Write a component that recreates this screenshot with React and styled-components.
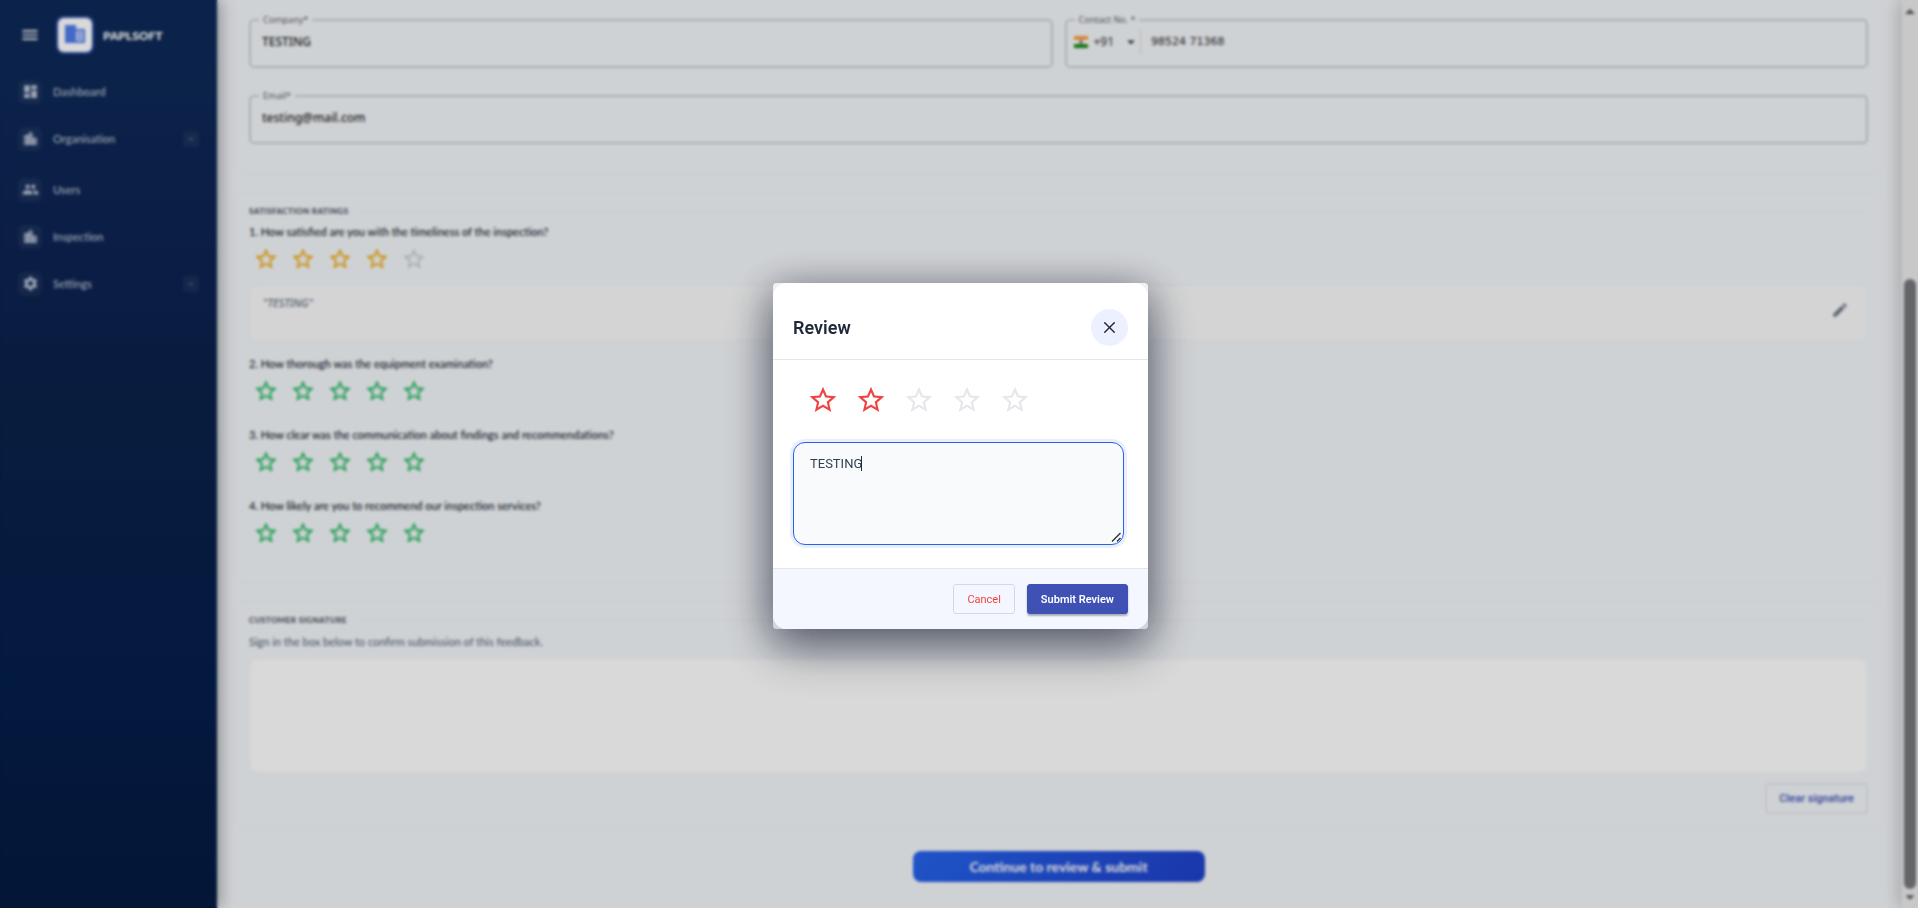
import React, { useState } from "react";
import styled, { createGlobalStyle, css } from "styled-components";
import {
  MdMenu,
  MdDashboard,
  MdLocationCity,
  MdPeople,
  MdSettings,
  MdEdit,
  MdExpandMore,
  MdArrowDropDown,
  MdArrowDropUp,
} from "react-icons/md";
import { X } from "lucide-react";

const GlobalStyle = createGlobalStyle`
  *, *::before, *::after {
    box-sizing: border-box;
  }
  body {
    margin: 0;
    background: #f4f7fa;
    font-family: "Noto Sans", sans-serif;
    color: #1e293b;
  }
  button, input, textarea, select {
    font-family: inherit;
  }
`;

// 전체 레이아웃
const Shell = styled.div`
  display: flex;
  height: 100vh;
  overflow: hidden;
`;

// 사이드바
const Sidebar = styled.aside`
  width: 217px;
  flex-shrink: 0;
  background: linear-gradient(180deg, #0e2a58 0%, #0d2352 28%, #0a2148 45%, #041e4a 75%, #051a40 100%);
  box-shadow: 4px 0 14px rgba(0, 0, 0, 0.3);
  z-index: 1;
`;

const Brand = styled.div`
  display: flex;
  align-items: center;
  height: 68px;
  padding: 2px 0 0 20px;
  color: #fff;
`;

const MenuButton = styled.button`
  display: flex;
  padding: 0;
  border: none;
  background: none;
  color: #fff;
`;

const LogoTile = styled.div`
  display: flex;
  align-items: center;
  justify-content: center;
  width: 34px;
  height: 34px;
  margin: 0 11px 0 18px;
  border-radius: 6px;
  background: #fff;
  box-shadow: 0 0 0 2px rgba(79, 124, 255, 0.5);
`;

const BrandName = styled.strong`
  font-family: Lato, sans-serif;
  font-size: 12px;
  font-weight: 900;
`;

const NavList = styled.ul`
  list-style: none;
  margin: 0;
  padding: 0 18px;
`;

const NavItem = styled.li`
  display: flex;
  align-items: center;
  height: 47px;
  margin-bottom: ${(props) => (props.$spaced ? "4px" : "0")};
`;

const NavLink = styled.a`
  display: flex;
  align-items: center;
  flex: 1;
  gap: 11px;
  color: #b9c4d6;
  font-family: Lato, sans-serif;
  font-size: 11px;
  font-weight: 500;
  text-decoration: none;
`;

const NavIcon = styled.span`
  display: flex;
  align-items: center;
  justify-content: center;
  width: 24px;
  height: 24px;
  border-radius: 6px;
  background: rgba(255, 255, 255, 0.05);
`;

const NavToggle = styled.button`
  display: flex;
  align-items: center;
  justify-content: center;
  width: 16px;
  height: 16px;
  padding: 0;
  border: none;
  border-radius: 4px;
  background: rgba(255, 255, 255, 0.05);
  color: #6d7b96;
`;

// 본문
const Main = styled.main`
  flex: 1;
  min-width: 0;
  padding: 0 19px 0 17px;
`;

const Card = styled.section`
  border: 1px solid #efeff4;
  border-radius: 10px;
  padding: 0 14px;
  margin-bottom: 18px;
  ${(props) =>
    props.$first &&
    css`
      border-top: none;
      border-radius: 0 0 10px 10px;
      padding-top: 13px;
      padding-bottom: 29px;
    `}
`;

const FieldGrid = styled.div`
  display: grid;
  grid-template-columns: 1fr 1fr;
  gap: 21px 12px;
`;

const Field = styled.fieldset`
  display: flex;
  align-items: center;
  height: 55px;
  min-width: 0;
  margin: 0;
  padding: 0 11px 10px;
  border: 2px solid #cbced2;
  border-radius: 5px;
  grid-column: ${(props) => (props.$wide ? "1 / -1" : "auto")};
  legend {
    padding: 0 4px;
    margin-left: -3px;
    font-size: 9px;
    line-height: 14px;
    color: #5b616b;
  }
`;

const TextInput = styled.input`
  flex: 1;
  min-width: 0;
  padding: 0;
  border: none;
  background: none;
  font-size: 12px;
  font-weight: 500;
  color: #1c1f24;
  outline: none;
  ${(props) => props.$phone && `font-family: "DejaVu Sans", sans-serif; font-size: 11px;`}
`;

const DialCode = styled.button`
  display: flex;
  align-items: center;
  height: 26px;
  margin-left: -4px;
  margin-right: 10px;
  padding: 0;
  border: none;
  border-right: 1px solid #d3d5d9;
  background: none;
  font-size: 12px;
  color: #26292e;
  svg:first-child {
    margin-right: 6px;
  }
  svg:last-child {
    margin-left: 8px;
  }
`;

const SectionTitle = styled.h2`
  display: flex;
  align-items: center;
  gap: 8px;
  margin: 0;
  padding: 12px 0 8px;
  font-family: Lato, sans-serif;
  font-size: 8px;
  line-height: 12px;
  font-weight: 900;
  letter-spacing: 0.05em;
  text-transform: uppercase;
  color: #4b5563;
  &::after {
    content: "";
    flex: 1;
    height: 1px;
    background: #ececf1;
  }
`;

const QuestionList = styled.div`
  padding-bottom: 12px;
`;

const Question = styled.div`
  height: ${(props) => (props.$reviewed ? "60px" : "71px")};
  p {
    margin: 0;
    font-family: Lato, sans-serif;
    font-size: 11px;
    line-height: 14px;
    font-weight: 500;
    color: #0f172a;
  }
`;

const StarRow = styled.div`
  display: flex;
  gap: ${(props) => (props.$large ? "16px" : "11px")};
  padding: ${(props) => (props.$large ? "24px 34px" : "7px 4px")};
`;

const StarButton = styled.button`
  display: flex;
  padding: 0;
  border: none;
  background: none;
  color: ${(props) => props.$color};
`;

const ReviewNote = styled.div`
  display: flex;
  align-items: center;
  justify-content: space-between;
  height: 56px;
  margin-bottom: 16px;
  padding: 0 18px 6px 13px;
  border: 1px solid #efeff3;
  border-radius: 8px;
  background: #f9fafb;
  color: #4b5563;
  em {
    align-self: flex-start;
    padding-top: 9px;
    font-size: 11px;
    line-height: 16px;
  }
`;

const IconButton = styled.button`
  display: flex;
  padding: 0;
  border: none;
  background: none;
  color: #6b7280;
`;

const Hint = styled.p`
  margin: 0;
  padding-bottom: 8px;
  font-family: Lato, sans-serif;
  font-size: 11px;
  line-height: 16px;
  color: #526077;
`;

const SignaturePad = styled.div`
  height: 115px;
  border: 1px solid #f0f0f4;
  border-radius: 8px;
  background: #fff;
`;

const ClearRow = styled.div`
  display: flex;
  justify-content: flex-end;
  padding: 10px 0 13px;
`;

const ClearButton = styled.button`
  height: 31px;
  padding: 0 12px;
  border: 2px solid #e4e6ec;
  border-radius: 4px;
  background: none;
  font-family: Roboto, sans-serif;
  font-size: 11px;
  font-weight: 500;
  color: #3f51b5;
`;

const ContinueButton = styled.button`
  display: block;
  width: 292px;
  height: 31px;
  margin: 23px auto 0;
  border: none;
  border-radius: 8px;
  background: linear-gradient(135deg, #2563eb, #1e40c8);
  font-family: Lato, sans-serif;
  font-size: 14px;
  font-weight: 700;
  color: #fff;
`;

const ScrollRail = styled.div`
  display: flex;
  flex-direction: column;
  align-items: center;
  width: 16px;
  background: #ececec;
  box-shadow: -2px 0 18px rgba(0, 0, 0, 0.25);
  color: #55575b;
  svg {
    flex-shrink: 0;
  }
`;

const ScrollThumb = styled.div`
  width: 12px;
  height: calc(67vh + 2px);
  margin-top: auto;
  margin-bottom: -3px;
  border-radius: 6px;
  background: #75777b;
`;

// 리뷰 모달
const Backdrop = styled.div`
  position: fixed;
  inset: 0;
  z-index: 10;
  display: flex;
  align-items: center;
  justify-content: center;
  padding: 4px 0 0 3px;
  background: rgba(0, 0, 0, 0.15);
  backdrop-filter: blur(1.5px);
  font-family: Roboto, sans-serif;
`;

const DialogSurface = styled.div`
  width: 375px;
  border-radius: 4px;
  background: linear-gradient(#f1f1f2, #d4d5d9);
  box-shadow: 0 20px 50px rgba(15, 23, 42, 0.45), 0 6px 40px rgba(15, 23, 42, 0.4);
`;

const Dialog = styled.div`
  overflow: hidden;
  border-radius: 14px;
  background: #fff;
`;

const DialogHeader = styled.header`
  display: flex;
  align-items: center;
  justify-content: space-between;
  height: 77px;
  padding: 12px 20px 0;
  border-bottom: 1px solid #e2e5ea;
  h1 {
    margin: 0;
    font-size: 18px;
    font-weight: 600;
    color: #1e293b;
  }
`;

const CloseButton = styled.button`
  display: flex;
  align-items: center;
  justify-content: center;
  width: 37px;
  height: 37px;
  padding: 0;
  border: none;
  border-radius: 50%;
  background: #edf1ff;
  color: #1e293b;
`;

const ReviewField = styled.div`
  position: relative;
  padding: 2px 24px 23px 20px;
`;

const ReviewArea = styled.textarea`
  display: block;
  width: 100%;
  height: 103px;
  padding: 13px 16px;
  border: 1px solid #2563eb;
  border-radius: 12px;
  outline: none;
  background: #f8fafc;
  box-shadow: 0 0 0 3px rgba(37, 99, 235, 0.1);
  font-size: 13px;
  line-height: 16px;
  color: #334155;
  caret-color: transparent;
  resize: none;
`;

const Caret = styled.span`
  position: absolute;
  top: 16px;
  left: 88px;
  width: 1px;
  height: 15px;
  background: #1e293b;
`;

const ResizeGrip = styled.svg`
  position: absolute;
  right: 26px;
  bottom: 25px;
  pointer-events: none;
`;

const DialogFooter = styled.footer`
  display: flex;
  justify-content: flex-end;
  gap: 12px;
  padding: 15px 20px;
  border-top: 1px solid #e2e5ea;
  background: #f4f7ff;
`;

const ActionButton = styled.button`
  height: 30px;
  padding: 0 13px;
  border: 1px solid #d5d9e4;
  border-radius: 3px;
  background: transparent;
  font-size: 11px;
  font-weight: 400;
  color: #f44336;
  ${(props) =>
    props.$primary &&
    css`
      border-color: #3f51b5;
      background: #3f51b5;
      color: #fff;
      font-weight: 600;
      box-shadow: 0 2px 2px rgba(0, 0, 0, 0.3);
    `}
`;

const NAV = [
  { name: "Dashboard", icon: MdDashboard },
  { name: "Organisation", icon: MdLocationCity, toggle: true },
  { name: "Users", icon: MdPeople },
  { name: "Inspection", icon: MdLocationCity },
  { name: "Settings", icon: MdSettings, toggle: true },
];

const QUESTIONS = [
  { text: "How satisfied are you with the timeliness of the inspection?", score: 4, note: "TESTING" },
  { text: "How thorough was the equipment examination?", score: 5 },
  { text: "How clear was the communication about findings and recommendations?", score: 5 },
  { text: "How likely are you to recommend our inspection services?", score: 5 },
];

const scoreColor = (score) => {
  if (score <= 2) return "#ef4444";
  if (score <= 4) return "#eda60c";
  return "#16b455";
};

const StarIcon = ({ size }) => (
  <svg width={size} height={size} viewBox="0 0 24 24" fill="currentColor">
    <path d="M22 9.24l-7.19-.62L12 2 9.19 8.63 2 9.24l5.46 4.73L5.82 21 12 17.27 18.18 21l-1.63-7.03L22 9.24zM12 15.4l-3.76 2.27 1-4.28-3.32-2.88 4.38-.38L12 6.1l1.71 4.04 4.38.38-3.32 2.88 1 4.28L12 15.4z" />
  </svg>
);

const Stars = ({ score, large, onChange }) => (
  <StarRow $large={large}>
    {[1, 2, 3, 4, 5].map((n) => (
      <StarButton
        key={n}
        type="button"
        aria-label={`${n} star`}
        $color={n <= score ? scoreColor(score) : large ? "#e5e7eb" : "#c6c9cf"}
        onClick={() => onChange && onChange(n)}
      >
        <StarIcon size={large ? 32 : 26} />
      </StarButton>
    ))}
  </StarRow>
);

const Logo = () => (
  <svg width="22" height="22" viewBox="0 0 22 22">
    <path d="M1 1h11v4h9v14H1z" fill="#4f7bea" />
    <path d="M12 7h7v10h-7z" fill="#cfdcfb" />
    <path d="M14 9h3v2h-3zM14 13h3v2h-3z" fill="#4f7bea" />
  </svg>
);

const Flag = () => (
  <svg width="14" height="12" viewBox="0 0 14 12">
    <path d="M0 0h14v4H0z" fill="#ff9933" />
    <path d="M0 4h14v4H0z" fill="#fff" />
    <path d="M0 8h14v4H0z" fill="#138808" />
    <circle cx="7" cy="6" r="1.5" fill="#2a2a86" />
  </svg>
);

const App = () => {
  const [score, setScore] = useState(2);
  const [review, setReview] = useState("TESTING");

  return (
    <>
      <GlobalStyle />
      <Shell>
        <Sidebar>
          <Brand>
            <MenuButton type="button" aria-label="Menu">
              <MdMenu size={20} />
            </MenuButton>
            <LogoTile>
              <Logo />
            </LogoTile>
            <BrandName>PAPLSOFT</BrandName>
          </Brand>
          <NavList>
            {NAV.map(({ name, icon: Icon, toggle }) => (
              <NavItem key={name} $spaced={name === "Organisation"}>
                <NavLink href="#">
                  <NavIcon>
                    <Icon size={17} />
                  </NavIcon>
                  {name}
                </NavLink>
                {toggle && (
                  <NavToggle type="button" aria-label={`Expand ${name}`}>
                    <MdExpandMore size={10} />
                  </NavToggle>
                )}
              </NavItem>
            ))}
          </NavList>
        </Sidebar>

        <Main>
          <Card $first>
            <FieldGrid>
              <Field>
                <legend>Company*</legend>
                <TextInput aria-label="Company" defaultValue="TESTING" />
              </Field>
              <Field>
                <legend>Contact No. *</legend>
                <DialCode type="button">
                  <Flag />
                  +91
                  <MdArrowDropDown size={18} />
                </DialCode>
                <TextInput $phone aria-label="Contact number" defaultValue="98524 71368" />
              </Field>
              <Field $wide>
                <legend>Email*</legend>
                <TextInput aria-label="Email" defaultValue="testing@mail.com" />
              </Field>
            </FieldGrid>
          </Card>

          <Card>
            <SectionTitle>Satisfaction ratings</SectionTitle>
            <QuestionList>
              {QUESTIONS.map((q, i) => (
                <React.Fragment key={q.text}>
                  <Question $reviewed={!!q.note}>
                    <p>
                      {i + 1}. {q.text}
                    </p>
                    <Stars score={q.score} />
                  </Question>
                  {q.note && (
                    <ReviewNote>
                      <em>"{q.note}"</em>
                      <IconButton type="button" aria-label="Edit review">
                        <MdEdit size={18} />
                      </IconButton>
                    </ReviewNote>
                  )}
                </React.Fragment>
              ))}
            </QuestionList>
          </Card>

          <Card>
            <SectionTitle>Customer signature</SectionTitle>
            <Hint>Sign in the box below to confirm submission of this feedback.</Hint>
            <SignaturePad />
            <ClearRow>
              <ClearButton type="button">Clear signature</ClearButton>
            </ClearRow>
          </Card>

          <ContinueButton type="button">Continue to review &amp; submit</ContinueButton>
        </Main>

        <ScrollRail>
          <MdArrowDropUp size={24} />
          <ScrollThumb />
          <MdArrowDropDown size={22} />
        </ScrollRail>
      </Shell>

      <Backdrop>
        <DialogSurface>
          <Dialog role="dialog" aria-label="Review">
            <DialogHeader>
              <h1>Review</h1>
              <CloseButton type="button" aria-label="Close">
                <X size={19} strokeWidth={1.8} />
              </CloseButton>
            </DialogHeader>
            <Stars large score={score} onChange={setScore} />
            <ReviewField>
              <ReviewArea
                aria-label="Review text"
                value={review}
                onChange={(e) => setReview(e.target.value)}
              />
              <Caret />
              <ResizeGrip width="11" height="11" viewBox="0 0 11 11" stroke="#333" strokeWidth="1.4">
                <path d="M1 9.5L9.5 1M6 9.5L9.5 6" fill="none" />
              </ResizeGrip>
            </ReviewField>
            <DialogFooter>
              <ActionButton type="button">Cancel</ActionButton>
              <ActionButton type="button" $primary>
                Submit Review
              </ActionButton>
            </DialogFooter>
          </Dialog>
        </DialogSurface>
      </Backdrop>
    </>
  );
};

export default App;
